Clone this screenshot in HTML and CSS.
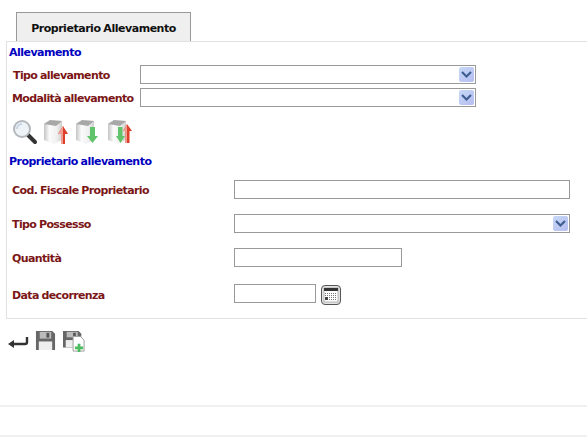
FILE: index.html
```html
<!DOCTYPE html>
<html lang="it">
<head>
<meta charset="utf-8">
<title>Proprietario Allevamento</title>
<link rel="stylesheet" href="styles.css">
</head>
<body>
<svg class="defs" width="0" height="0">
  <defs>
    <linearGradient id="box" x1="0" x2="1" y1="0" y2="0"><stop offset="0" stop-color="#c4c4c4"/><stop offset=".3" stop-color="#fbfbfb"/><stop offset=".7" stop-color="#f0f0f0"/><stop offset="1" stop-color="#cfcfcf"/></linearGradient>
    <symbol id="cube" viewBox="0 0 26 26"><path d="M1 5l6-4 12 1v19l-8 4-10-4z" fill="url(#box)"/><path d="M1 5l6-4 12 1-6 5z" fill="#a8a8a8"/></symbol>
    <symbol id="chev" viewBox="0 0 13 9"><path d="M2 2l4.500 4.500L11 2" fill="none" stroke="#3f5f92" stroke-width="2.200"/></symbol>
  </defs>
</svg>
<div class="tabs"><div class="tab">Proprietario Allevamento</div></div>
<main class="panel">
  <h2 class="section">Allevamento</h2>
  <div class="top-row"><label class="lbl first">Tipo allevamento</label><div class="field select top-field"><span class="arrow"><svg width="13" height="9"><use href="#chev"/></svg></span></div></div>
  <div class="top-row"><label class="lbl">Modalità allevamento</label><div class="field select top-field"><span class="arrow"><svg width="13" height="9"><use href="#chev"/></svg></span></div></div>
  <div class="toolbar">
    <svg width="26" height="26" viewBox="0 0 26 26"><path d="M15 15l8 8" stroke="#333" stroke-width="4" stroke-linecap="round"/><circle cx="10" cy="10" r="8" fill="#eef3f8" stroke="#b4b8bc" stroke-width="2"/><path d="M5 10a5 5 0 0 1 5-5" fill="none" stroke="#c5d3e2" stroke-width="2"/></svg>
    <svg width="26" height="26" viewBox="0 0 26 26"><use href="#cube" width="26" height="26"/><path d="M20 7l5 8h-3v10h-4V15h-3z" fill="#dd3f2a"/><path d="M20 7l-5 8h3v10h2z" fill="#f0a090"/></svg>
    <svg width="26" height="26" viewBox="0 0 26 26"><use href="#cube" width="26" height="26"/><path d="M15 8h5v9h3l-5.500 7-5.500-7h3z" fill="#62c46a"/></svg>
    <svg width="26" height="26" viewBox="0 0 26 26"><use href="#cube" width="26" height="26"/><path d="M20 5l5 7h-2.500v12h-4V12H16z" fill="#dd3f2a"/><path d="M20 5l-4 7h2.500v12H20z" fill="#f0a090"/><path d="M11 8h4.500v9H18l-4.500 7L9 17h2z" fill="#62c46a"/></svg>
  </div>
  <h2 class="section second">Proprietario allevamento</h2>
  <div class="form-row row-cf"><label class="lbl">Cod. Fiscale Proprietario</label><div class="field wide"></div></div>
  <div class="form-row"><label class="lbl">Tipo Possesso</label><div class="field select wide"><span class="arrow"><svg width="13" height="9"><use href="#chev"/></svg></span></div></div>
  <div class="form-row"><label class="lbl">Quantità</label><div class="field medium"></div></div>
  <div class="form-row row-date"><label class="lbl">Data decorrenza</label><div class="field short"></div>
    <svg class="cal" width="20" height="20" viewBox="0 0 20 20"><rect x=".5" y=".5" width="19" height="19" rx="3.500" fill="#e4e4e4" stroke="#555"/><rect x="3" y="3" width="14" height="14" fill="#fff" stroke="#777" stroke-width=".5"/><rect x="3" y="3" width="14" height="3" fill="#333"/><path d="M4 8.500h12M4 10.500h12M4 12.500h12M4 14.500h12" stroke="#777" stroke-dasharray="1 1"/><rect x="4" y="12" width="3" height="3" fill="#444"/></svg>
  </div>
</main>
<div class="actions">
  <svg width="22" height="22" viewBox="0 0 22 22"><path d="M20 7v5a2 2 0 0 1-2 2H5" fill="none" stroke="#333" stroke-width="2.400"/><path d="M7 10l-6 4 6 4z" fill="#333"/></svg>
  <svg width="21" height="21" viewBox="0 0 22 22"><path d="M1 1h17l3 3v17H1z" fill="#676767"/><rect x="5" y="2" width="12" height="7" fill="#bbb"/><rect x="12" y="3" width="3" height="5" fill="#555"/><rect x="4" y="12" width="14" height="9" fill="#eee"/></svg>
  <svg width="24" height="22" viewBox="0 0 26 24"><path d="M1 1h17l3 3v15H1z" fill="#676767"/><rect x="5" y="2" width="12" height="6" fill="#bbb"/><rect x="12" y="3" width="3" height="4" fill="#555"/><rect x="4" y="11" width="12" height="8" fill="#eee"/><path d="M12 7h8l4 4v12H12z" fill="#fff" stroke="#999"/><path d="M17 15h3v3h3v3h-3v3h-3v-3h-3v-3h3z" fill="#4dbb60"/></svg>
</div>
<div class="footer"></div>
</body>
</html>
```
FILE: styles.css
```css
* { box-sizing: border-box; }
html, body { margin: 0; padding: 0; }
body {
  width: 587px;
  height: 437px;
  overflow: hidden;
  background: #fff;
  font-family: "DejaVu Sans", sans-serif;
  font-size: 11px;
  font-weight: bold;
  letter-spacing: -0.62px;
  word-spacing: -0.5px;
}
.defs { display: block; height: 0; }
.tabs { padding: 12px 0 0 16px; height: 41px; }
.tab {
  width: 175px;
  height: 29px;
  padding-top: 9px;
  text-align: center;
  color: #111;
  background: #efefef;
  border: 1px solid #999;
  border-bottom: 0;
  letter-spacing: -0.47px;
}
.panel {
  margin-left: 6px;
  height: 278px;
  border: 1px solid #e2e2e2;
  border-right: 0;
  padding-left: 2px;
}
.section { margin: 0; font-size: 11px; line-height: 14px; color: #0000c0; letter-spacing: -0.52px; }
.panel > .section:first-child { margin-top: 4px; }
.section.second { margin-top: 10px; }
.lbl { color: #7b1616; line-height: 14px; padding-top: 2px; }
.top-row { display: flex; align-items: center; height: 19px; margin-top: 4px; padding-left: 3px; }
.section + .top-row { margin-top: 5px; }
.top-row .lbl { width: 128px; flex: none; }
.top-row .lbl.first { padding-left: 1px; }
.field { height: 19px; border: 1px solid #999; background: #fff; flex: none; }
.top-field { width: 336px; }
.select { display: flex; justify-content: flex-end; padding: 1px; }
.arrow {
  width: 15px;
  height: 15px;
  display: flex;
  align-items: center;
  justify-content: center;
  border-radius: 2px;
  background: linear-gradient(135deg, #c6d8f7, #b6bdf0);
}
.toolbar { display: flex; gap: 6px; margin-top: 12px; padding-left: 3px; height: 26px; }
.toolbar svg:first-child { margin-right: -1px; }
.form-row { display: flex; align-items: center; height: 19px; margin-top: 15px; padding-left: 3px; }
.form-row.row-cf { margin-top: 11px; }
.form-row.row-date { margin-top: 17px; }
.form-row.row-date .lbl { padding-top: 4px; }
.form-row .lbl { width: 222px; flex: none; }
.wide { width: 336px; }
.medium { width: 168px; }
.short { width: 82px; }
.cal { margin-left: 5px; margin-top: 2px; flex: none; }
.actions { display: flex; align-items: flex-start; gap: 6px; padding: 11px 0 0 7px; height: 86px; }
.footer {
  height: 32px;
  border-top: 2px solid #f0f0f0;
  border-bottom: 2px solid #f0f0f0;
}
```
